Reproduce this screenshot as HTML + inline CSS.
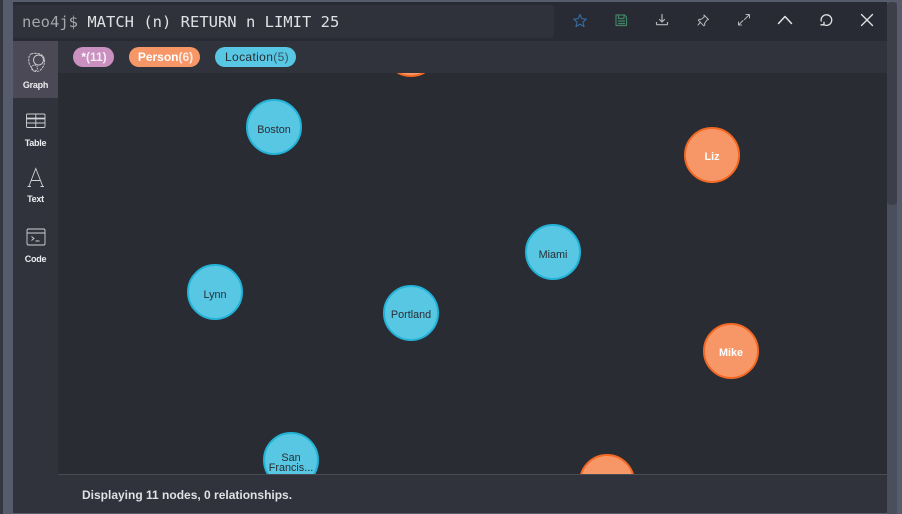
<!DOCTYPE html>
<html>
<head>
<meta charset="utf-8">
<style>
html,body{margin:0;padding:0;width:902px;height:514px;overflow:hidden;background:#565c6c;font-family:"Liberation Sans",sans-serif;}
.abs{position:absolute;}
#leftstrip{left:0;top:0;width:3px;height:514px;background:#33363f;}
#frame{left:13px;top:2px;width:874px;height:511px;background:#30333c;overflow:hidden;}
#toolbar{left:13px;top:2px;width:874px;height:39px;background:#282b33;}
#editor{left:13px;top:5px;width:541px;height:33px;background:#2f323a;border-radius:0 3px 3px 0;}
#prompt{left:22px;top:12px;font-family:"DejaVu Sans Mono","Liberation Mono",monospace;font-size:15.5px;line-height:20px;color:#dfe1e4;white-space:pre;}
#prompt span{color:#a4a7ad;}
#pillbar{left:58px;top:41px;width:829px;height:32px;background:#30333c;}
#graph{left:58px;top:73px;width:829px;height:401px;background:#2a2c33;overflow:hidden;}
#side{left:13px;top:41px;width:45px;height:472px;background:#30333c;}
#active{left:13px;top:41px;width:45px;height:57px;background:#4b4955;}
.sl{position:absolute;left:13px;width:45px;text-align:center;font-size:9px;font-weight:bold;letter-spacing:-.25px;color:#eceef0;line-height:12px;}
.pill{position:absolute;top:47px;height:20px;border-radius:10px;font-size:12px;font-weight:bold;line-height:20px;text-align:center;white-space:nowrap;box-sizing:border-box;}
.pill i{font-style:normal;opacity:.82;}
.node{position:absolute;width:52px;height:52px;border-radius:50%;border-width:2px;border-style:solid;text-align:center;font-size:10.8px;}
.loc{background:#57c7e3;border-color:#23b3d7;color:#2a2c33;}
.per{background:#f79767;border-color:#f36924;color:#fff;font-weight:bold;}
.node span{display:block;line-height:10px;white-space:nowrap;}
#footer{left:58px;top:474px;width:829px;height:39px;background:#30333c;border-top:1px solid #4a4c54;box-sizing:border-box;}
#ftext{left:82px;top:488px;font-size:12px;font-weight:bold;line-height:15px;color:#dfe1e4;white-space:nowrap;}
#track{left:887px;top:2px;width:10px;height:512px;background:#4a4f5d;}
#thumb{left:887px;top:2px;width:10px;height:203px;background:#3c3f4a;border-radius:4px;}
svg{position:absolute;overflow:visible;fill:none;}
</style>
</head>
<body>
<div class="abs" id="leftstrip"></div>
<div class="abs" id="frame"></div>
<div class="abs" id="track"></div>
<div class="abs" id="thumb"></div>

<div class="abs" id="graph">
  <div class="node per" style="left:325px;top:-52px;"></div>
  <div class="node loc" style="left:188px;top:26px;"><span style="margin-top:24px;">Boston</span></div>
  <div class="node per" style="left:626px;top:54px;"><span style="margin-top:23px;">Liz</span></div>
  <div class="node loc" style="left:467px;top:151px;"><span style="margin-top:24px;">Miami</span></div>
  <div class="node loc" style="left:129px;top:191px;"><span style="margin-top:24px;">Lynn</span></div>
  <div class="node loc" style="left:325px;top:212px;"><span style="margin-top:23px;">Portland</span></div>
  <div class="node per" style="left:645px;top:250px;"><span style="margin-top:23px;">Mike</span></div>
  <div class="node loc" style="left:205px;top:359px;"><span style="margin-top:19px;">San</span><span>Francis...</span></div>
  <div class="node per" style="left:521px;top:381px;"></div>
</div>

<div class="abs" id="pillbar"></div>
<div class="pill" style="left:73px;width:41px;padding-left:1px;background:#c990c0;color:#fff;">*<i>(11)</i></div>
<div class="pill" style="left:129px;width:71px;padding-left:2px;background:#f79767;color:#fff;">Person<i>(6)</i></div>
<div class="pill" style="left:215px;width:81px;padding-left:3px;background:#57c7e3;color:#2a2c33;font-weight:normal;letter-spacing:.36px;">Location<i style="opacity:.75;">(5)</i></div>

<div class="abs" id="toolbar"></div>
<div class="abs" id="editor" style="top:5px;"></div>
<div class="abs" id="prompt"><span>neo4j$</span> MATCH (n) RETURN n LIMIT 25</div>

<svg style="left:0;top:0;" width="902" height="514" stroke-linecap="round" stroke-linejoin="round">
  <path d="M580 14.500l1.800 4.200 4.600.4-3.500 3 1.100 4.500-4-2.400-4 2.400 1.100-4.500-3.500-3 4.600-.4z" stroke="#35689a" stroke-width="1.200"/>
  <path d="M616 15h8.500l2 2v8.500h-10.500z M618.500 15v3.500h5.500v-3.500 M618.500 21h6 M618.500 23.500h6" stroke="#3f8266" stroke-width="1.200"/>
  <path d="M662 14.500v7 M659.500 19.500l2.500 2.500 2.500-2.500 M656.500 22.500v1.500q0 .7.700.7h9.600q.7 0 .7-.7v-1.500" stroke="#b4b6ba" stroke-width="1.200"/>
  <path d="M704 15l4.500 4.500-1.500.5-2.500 3.500.3 1.500-1 .8-5.500-5.500.8-1 1.500.3 3.500-2.500z M700.500 22l-2.500 3" stroke="#b4b6ba" stroke-width="1"/>
  <path d="M744.500 19.500l5-5 M746 14.500h3.500v3.500 M743 20.500l-4.500 4.500 M738.500 22v3h3" stroke="#b4b6ba" stroke-width="1"/>
  <path d="M778.500 23.500l6.500-7 6.500 7" stroke="#e2e3e6" stroke-width="1.500"/>
  <path d="M823.500 24.500a5.300 5.300 0 1 0-2.300-3.500 M821 24.800h3v-2.500" stroke="#e2e3e6" stroke-width="1.300"/>
  <path d="M861.500 14.500l11 11 M872.500 14.500l-11 11" stroke="#e2e3e6" stroke-width="1.300"/>
</svg>

<div class="abs" id="side"></div>
<div class="abs" id="active"></div>
<svg style="left:0;top:0;" width="902" height="514" stroke="#d0d2d6" stroke-width=".9">
  <path d="M31 54c3-1.300 7-.8 10 .5 3 1.500 4 4.500 3.500 8-.5 3.500-2.500 7-5.500 8.500-3 1-5.500.5-6.500-1.500-1-2.500-3-4-3.500-7-.5-3 -.5-7 2-8.500z" stroke-dasharray="2.500 .8"/>
  <circle cx="38.500" cy="60" r="5"/>
  <circle cx="34.500" cy="68" r="3" stroke-dasharray="1.500 .8"/>
  <rect x="26.500" y="114" width="18.500" height="13.500" rx="1"/>
  <path d="M26.500 118.500h18.500" stroke-width="1.800"/>
  <path d="M26.500 123h18.500 M35.800 114v13.500"/>
  <path d="M29 186l6.800-17.500 6.800 17.500 M31 180.500h9.500 M27.500 186.500h3.500 M40.500 186.500h3.500"/>
  <rect x="27" y="229" width="18" height="16" rx="1.500"/>
  <path d="M27 233h18"/>
  <path d="M31.500 236.500l2.500 2-2.500 2 M35.500 241h4"/>
</svg>
<div class="sl" style="top:79px;">Graph</div>
<div class="sl" style="top:137px;">Table</div>
<div class="sl" style="top:193px;">Text</div>
<div class="sl" style="top:253px;">Code</div>

<div class="abs" id="footer"></div>
<div class="abs" id="ftext">Displaying 11 nodes, 0 relationships.</div>
</body>
</html>
